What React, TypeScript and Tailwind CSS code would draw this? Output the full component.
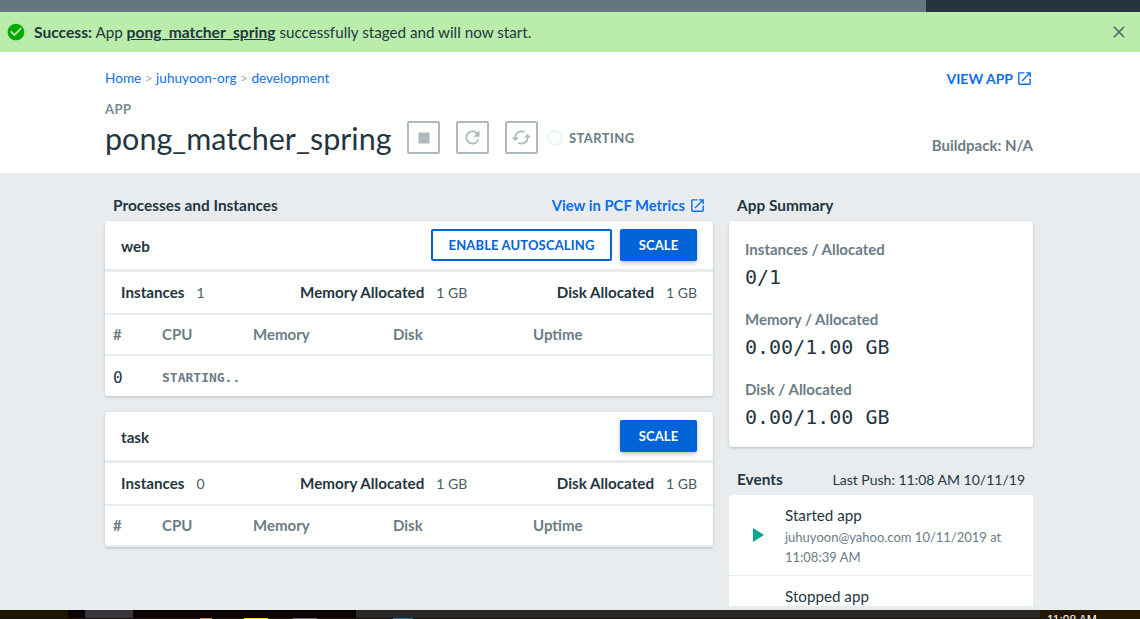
import { MdCached, MdCheckCircle, MdClose, MdOpenInNew, MdPlayArrow, MdRefresh, MdStop } from "react-icons/md";

const columns = [
  { label: "#", width: "w-[49px]" },
  { label: "CPU", width: "w-[91px]" },
  { label: "Memory", width: "w-[140px]" },
  { label: "Disk", width: "w-[140px]" },
  { label: "Uptime", width: "w-[120px]" },
];

const summary = [
  { label: "Instances / Allocated", value: "0/1" },
  { label: "Memory / Allocated", value: "0.00/1.00 GB" },
  { label: "Disk / Allocated", value: "0.00/1.00 GB" },
];

const ScaleButton = () => (
  <button className="h-8 w-[77px] rounded-[2px] bg-[#0063d6] pt-[2px] text-[13px] font-bold tracking-[0.15px] text-white shadow-[0_2px_4px_rgba(0,0,0,0.25)]">
    SCALE
  </button>
);

const ProcessCard = ({ name, instances, autoscale, starting }: { name: string; instances: string; autoscale?: boolean; starting?: boolean }) => (
  <div className="rounded-[3px] bg-white shadow-[0_1px_3px_rgba(0,0,0,0.2)]">
    <div className="box-content flex h-[48px] items-center justify-between border-b-[3px] border-[#e8ecef] px-4">
      <span className="pt-[2px] text-[15.2px] font-bold text-[#243641]">{name}</span>
      <div className="flex items-center gap-2">
        {autoscale && (
          <button className="h-8 w-[181px] rounded-[2px] border-2 border-[#0063d6] pt-[2px] text-[13px] font-bold tracking-[0.15px] text-[#0063d6]">
            ENABLE AUTOSCALING
          </button>
        )}
        <ScaleButton />
      </div>
    </div>
    <div className="flex h-[41px] items-center justify-between px-4 text-[15.2px] text-[#243641]">
      <div className="flex items-baseline gap-3">
        <span className="font-bold">Instances</span>
        <span className="text-[14px] text-[#4a5b65]">{instances}</span>
      </div>
      <div className="ml-[6px] flex items-baseline gap-3">
        <span className="font-bold">Memory Allocated</span>
        <span className="text-[14px] text-[#4a5b65]">1 GB</span>
      </div>
      <div className="flex items-baseline gap-3">
        <span className="font-bold">Disk Allocated</span>
        <span className="text-[14px] text-[#4a5b65]">1 GB</span>
      </div>
    </div>
    <div className="flex h-[43px] items-center border-y-2 border-[#e8ecef] pl-2 text-[15px] font-bold text-[#6b7c86]">
      {columns.map((c) => (
        <span key={c.label} className={c.width}>{c.label}</span>
      ))}
    </div>
    {starting && (
      <div className="flex h-[40px] items-center pl-2 pt-[3px] font-['DejaVu_Sans_Mono',monospace]">
        <span className="w-[49px] text-[16px] text-[#243641]">0</span>
        <span className="text-[13px] font-bold text-[#6b7c86]">STARTING..</span>
      </div>
    )}
  </div>
);

const ActionButton = ({ children }: { children: React.ReactNode }) => (
  <div className="ml-4 flex h-[33px] w-[33px] items-center justify-center rounded-[2px] border-2 border-[#aeb8bd] text-[#aeb8bd]">
    {children}
  </div>
);

const App = () => {
  return (
    <div className="flex h-[619px] w-[1140px] flex-col overflow-hidden bg-[#e8ecef] font-['Lato',sans-serif]">
      {/* top nav, mostly scrolled away */}
      <div className="flex h-3 shrink-0 bg-[#64767f]">
        <div className="ml-auto w-[214px] bg-[#25343f]" />
      </div>

      {/* alert */}
      <div className="flex h-10 shrink-0 items-center bg-[#baecab] pl-[6px] pr-[11px] text-[15.2px] text-[#243641]">
        <MdCheckCircle size={20} className="text-[#00a800]" />
        <span className="ml-2 pt-[2px]">
          <b className="text-[15.6px]">Success:</b> App <b className="text-[15.6px] underline">pong_matcher_spring</b> successfully staged and will now start.
        </span>
        <MdClose size={20} className="ml-auto text-[#5c6b70]" />
      </div>

      {/* app header */}
      <div className="flex h-[121px] shrink-0 flex-col bg-white pl-[105px] pr-[107px] pt-[16px]">
        <div className="flex items-center justify-between">
          <div className="text-[13.6px] text-[#a0abb2]">
            <a className="text-[#0f6fe8]">Home</a> &gt; <a className="text-[#0f6fe8]">juhuyoon-org</a> &gt; <a className="text-[#0f6fe8]">development</a>
          </div>
          <div className="flex items-center gap-[3px] text-[14px] font-bold text-[#0f6fe8]">
            VIEW APP <MdOpenInNew size={17} />
          </div>
        </div>
        <div className="mt-[11px] text-[13px] font-bold tracking-[0.5px] text-[#7a8a93]">APP</div>
        <div className="-mt-[2px] flex items-center justify-between">
          <div className="flex items-center">
            <h1 className="w-[286px] text-[30.5px] leading-[40px] text-[#243641]">pong_matcher_spring</h1>
            <ActionButton><MdStop size={22} /></ActionButton>
            <ActionButton><MdRefresh size={21} /></ActionButton>
            <ActionButton><MdCached size={21} /></ActionButton>
            <div className="ml-[9px] h-[16px] w-[16px] rounded-full border-2 border-[#e8f6f4]" />
            <span className="ml-[6px] pt-[3px] text-[13px] font-bold tracking-[0.4px] text-[#6b7c86]">STARTING</span>
          </div>
          <span className="mt-[16px] text-[15px] font-bold text-[#6b7c86]">Buildpack: N/A</span>
        </div>
      </div>

      {/* content */}
      <div className="flex min-h-0 flex-1 gap-4 overflow-hidden px-[105px]">
        <div className="w-[608px] shrink-0">
          <div className="flex h-[48px] items-center justify-between pl-2 pr-[7px] pt-[17px] text-[15.4px]">
            <span className="font-bold text-[#243641]">Processes and Instances</span>
            <span className="flex items-center gap-1 text-[14.8px] font-bold text-[#0f6fe8]">
              View in PCF Metrics <MdOpenInNew size={17} />
            </span>
          </div>
          <div className="flex flex-col gap-4">
            <ProcessCard name="web" instances="1" autoscale starting />
            <ProcessCard name="task" instances="0" />
          </div>
        </div>

        <div className="w-[304px] shrink-0">
          <div className="flex h-[48px] items-center pl-2 pt-[17px] text-[15.4px] font-bold text-[#243641]">App Summary</div>
          <div className="rounded-[3px] bg-white px-4 pb-4 pt-[17px] shadow-[0_1px_3px_rgba(0,0,0,0.2)]">
            {summary.map((s) => (
              <div key={s.label} className="mb-[17px] last:mb-0">
                <div className="text-[15px] font-bold leading-[22px] text-[#6b7c86]">{s.label}</div>
                <div className="mt-[3px] font-['DejaVu_Sans_Mono',monospace] text-[20px] leading-[28px] text-[#243641]">{s.value}</div>
              </div>
            ))}
          </div>
          <div className="flex h-[48px] items-center justify-between px-2 pt-[17px] text-[#243641]">
            <span className="text-[15.4px] font-bold">Events</span>
            <span className="text-[14px]">Last Push: 11:08 AM 10/11/19</span>
          </div>
          <div className="rounded-t-[3px] bg-white">
            <div className="flex h-[81px] border-b border-[#e8ecef] pt-[10px]">
              <MdPlayArrow size={24} className="ml-4 mt-[18px] text-[#00a98f]" />
              <div className="ml-4 w-[226px]">
                <div className="text-[15.2px] leading-[20px] text-[#243641]">Started app</div>
                <div className="mt-[2px] text-[13px] leading-[20px] text-[#6b7c86]">juhuyoon@yahoo.com 10/11/2019 at 11:08:39 AM</div>
              </div>
            </div>
            <div className="pl-14 pt-[10px] text-[15.2px] leading-[20px] text-[#243641]">Stopped app</div>
          </div>
        </div>
      </div>

      {/* os taskbar, cut off by the capture */}
      <div className="flex h-[9px] shrink-0 overflow-hidden">
        <div className="w-[1040px] shrink-0">
          <div className="flex h-2">
            <div className="w-[68px] bg-[#1e1700]" />
            <div className="w-[17px] bg-[#0a0205]" />
            <div className="w-[48px] bg-[#37343a]" />
            <div className="w-[223px] bg-[#0a0205]" />
            <div className="flex-1 bg-[#282828]" />
          </div>
          <div className="flex h-px bg-[#1a1408]">
            <div className="ml-[200px] w-[12px] bg-[#c98a50]" />
            <div className="ml-[32px] w-[24px] bg-[#ffe000]" />
            <div className="ml-[25px] w-[24px] bg-[#6a6a70]" />
            <div className="ml-[76px] w-[20px] bg-[#2f6f9f]" />
          </div>
        </div>
        <div className="flex-1 bg-[#241800] pl-[7px] pt-[2px] font-['Liberation_Sans',sans-serif] text-[12px] leading-[16px] text-white">
          11:08 AM
        </div>
      </div>
    </div>
  );
};

export default App;
